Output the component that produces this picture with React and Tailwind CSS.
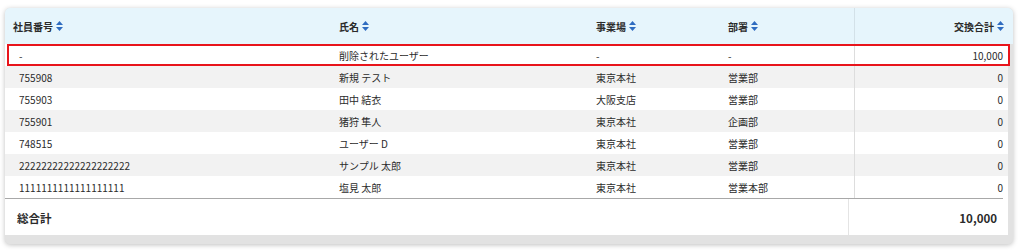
import React from "react";

const rows = [
  { id: "-", name: "削除されたユーザー", site: "-", dept: "-", total: "10,000" },
  { id: "755908", name: "新規 テスト", site: "東京本社", dept: "営業部", total: "0" },
  { id: "755903", name: "田中 結衣", site: "大阪支店", dept: "営業部", total: "0" },
  { id: "755901", name: "猪狩 隼人", site: "東京本社", dept: "企画部", total: "0" },
  { id: "748515", name: "ユーザー D", site: "東京本社", dept: "営業部", total: "0" },
  { id: "22222222222222222222", name: "サンプル 太郎", site: "東京本社", dept: "営業部", total: "0" },
  { id: "1111111111111111111", name: "塩見 太郎", site: "東京本社", dept: "営業本部", total: "0" },
];

function SortIcon() {
  return (
    <svg width="7" height="10" viewBox="0 0 7 10" className="ml-[3px] shrink-0">
      <path d="M3.5 0 L7 4 L0 4 Z" fill="#2f6cc0" />
      <path d="M3.5 10 L7 6 L0 6 Z" fill="#2f6cc0" />
    </svg>
  );
}

function Head({ children, className = "" }) {
  return (
    <div className={`flex items-center h-full ${className}`}>
      <span>{children}</span>
      <SortIcon />
    </div>
  );
}

export default function App() {
  return (
    <div
      className="w-[1024px] h-[252px] bg-white pt-[8px] pl-[5px]"
      style={{ fontFamily: "'Noto Sans CJK JP', 'Noto Sans', sans-serif" }}
    >
      <div className="w-[1008px] h-[236px] rounded-[5px] bg-[#e2e2e2] shadow-[0_1px_5px_rgba(0,0,0,0.25)] overflow-hidden flex flex-col text-[#2b2b2b]">
        {/* header */}
        <div className="grid grid-cols-[326px_257px_132px_134px_1fr] h-[36px] bg-[#e6f5fc] text-[10px] font-bold">
          <Head className="pl-[8px]">社員番号</Head>
          <Head className="pl-[8px]">氏名</Head>
          <Head className="pl-[8px]">事業場</Head>
          <Head className="pl-[8px]">部署</Head>
          <Head className="justify-end pr-[9px] border-l border-[#d3e1e8]">交換合計</Head>
        </div>
        {/* body */}
        <div className="flex">
          <div className="relative w-[1003px] bg-white">
            {rows.map((r, i) => (
              <div
                key={i}
                className={`grid grid-cols-[326px_257px_132px_134px_1fr] h-[22px] text-[10px] ${
                  i % 2 === 1 ? "bg-[#f2f2f2]" : "bg-white"
                }`}
              >
                <div className="flex items-center pl-[14px]">{r.id}</div>
                <div className="flex items-center pl-[8px]">{r.name}</div>
                <div className="flex items-center pl-[8px]">{r.site}</div>
                <div className="flex items-center pl-[8px]">{r.dept}</div>
                <div className="flex items-center justify-end pr-[5px] border-l border-[#dddddd]">{r.total}</div>
              </div>
            ))}
            <div className="absolute left-[2px] top-0 w-[1003px] h-[22px] border-2 border-[#e8141b] pointer-events-none" />
          </div>
          <div className="flex-1 bg-[#e2e2e2]" />
        </div>
        {/* footer */}
        <div className="flex">
          <div className="w-[998px] bg-white border-t border-[#a8a8a8] grid grid-cols-[843px_1fr] h-[37px] text-[11.5px] font-bold">
            <div className="flex items-center pl-[12px] pt-[3px]">総合計</div>
            <div className="flex items-center justify-end pr-[6px] pt-[3px] border-l border-[#e4e4e4]">10,000</div>
          </div>
          <div className="w-[5px] h-[37px] bg-white" />
          <div className="flex-1 bg-[#e2e2e2]" />
        </div>
        <div className="flex-1 bg-[#e2e2e2]" />
      </div>
    </div>
  );
}
